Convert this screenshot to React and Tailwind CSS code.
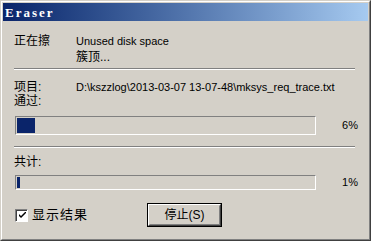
import React from 'react'

const font = { fontFamily: '"Liberation Sans", "Noto Sans CJK SC", sans-serif' }

function Groove() {
  return (
    <div className="w-[341px] h-[2px] border-t border-t-[#808080] border-b border-b-white" />
  )
}

function Progress({ height, fill }) {
  return (
    <div className="flex items-center">
      <div
        className={`w-[301px] ${height} ml-[1px] border border-t-[#808080] border-l-[#808080] border-b-white border-r-white p-[1px] flex`}
      >
        <div className={`${fill} h-full bg-[#0a246a]`} />
      </div>
    </div>
  )
}

export default function App() {
  return (
    <div
      className="w-[371px] h-[241px] bg-[#d4d0c8] border border-t-[#d4d0c8] border-l-[#d4d0c8] border-r-[#404040] border-b-[#404040] text-[12px] text-black"
      style={font}
    >
      <div className="w-full h-full border border-t-white border-l-white border-r-[#808080] border-b-[#808080] p-[1px] flex flex-col">
        {/* title bar */}
        <div className="h-[18px] bg-gradient-to-r from-[#0a246a] to-[#a6caf0] flex items-center pl-[2px]">
          <span
            className="text-white font-bold text-[13px] tracking-[2px] leading-none"
            style={{ fontFamily: '"Liberation Serif", serif' }}
          >
            Eraser
          </span>
        </div>

        {/* body */}
        <div className="flex flex-col pl-[11px] pt-[13px]">
          <div className="flex h-[14px] leading-[14px]">
            <span className="w-[62px]">正在擦</span>
            <span className="text-[11px]">Unused disk space</span>
          </div>
          <div className="flex h-[14px] leading-[14px] mt-[2px]">
            <span className="w-[62px]" />
            <span>簇顶...</span>
          </div>

          <div className="mt-[4px]">
            <Groove />
          </div>

          <div className="flex h-[14px] leading-[14px] mt-[10px]">
            <span className="w-[62px]">项目:</span>
            <span className="text-[11px]">D:\kszzlog\2013-03-07 13-07-48\mksys_req_trace.txt</span>
          </div>
          <div className="h-[14px] leading-[14px]">通过:</div>

          <div className="flex items-center mt-[8px] h-[19px]">
            <Progress height="h-[19px]" fill="w-[18px]" />
            <span className="w-[42px] text-right text-[11px]">6%</span>
          </div>

          <div className="mt-[11px]">
            <Groove />
          </div>

          <div className="h-[14px] leading-[14px] mt-[7px]">共计:</div>

          <div className="flex items-center mt-[6px] h-[15px]">
            <Progress height="h-[15px]" fill="w-[3px]" />
            <span className="w-[42px] text-right text-[11px]">1%</span>
          </div>

          <div className="flex items-center mt-[13px] h-[24px]">
            <div className="flex items-center w-[133px]">
              <div className="ml-[1px] shrink-0 w-[13px] h-[13px] box-border border border-solid border-t-[#808080] border-l-[#808080] border-r-[#ffffff] border-b-[#ffffff] bg-[#404040] p-0">
                <div className="w-[11px] h-[11px] bg-white border-t border-l border-solid border-t-[#404040] border-l-[#404040] flex items-center justify-center">
                  <svg width="7" height="7" viewBox="0 0 7 7">
                    <path d="M0 2 L2 4 L7 -1 L7 1 L2 6 L0 4 Z" fill="#000" />
                  </svg>
                </div>
              </div>
              <span className="ml-[4px] text-[13px] tracking-[1px]">显示结果</span>
            </div>
            <button className="w-[75px] h-[24px] border border-black bg-[#d4d0c8] p-0">
              <div className="w-full h-full border border-t-white border-l-white border-r-[#404040] border-b-[#404040]">
                <div className="w-full h-full border border-transparent border-r-[#808080] border-b-[#808080] flex items-center justify-center leading-none">
                  停止(S)
                </div>
              </div>
            </button>
          </div>
        </div>
      </div>
    </div>
  )
}
